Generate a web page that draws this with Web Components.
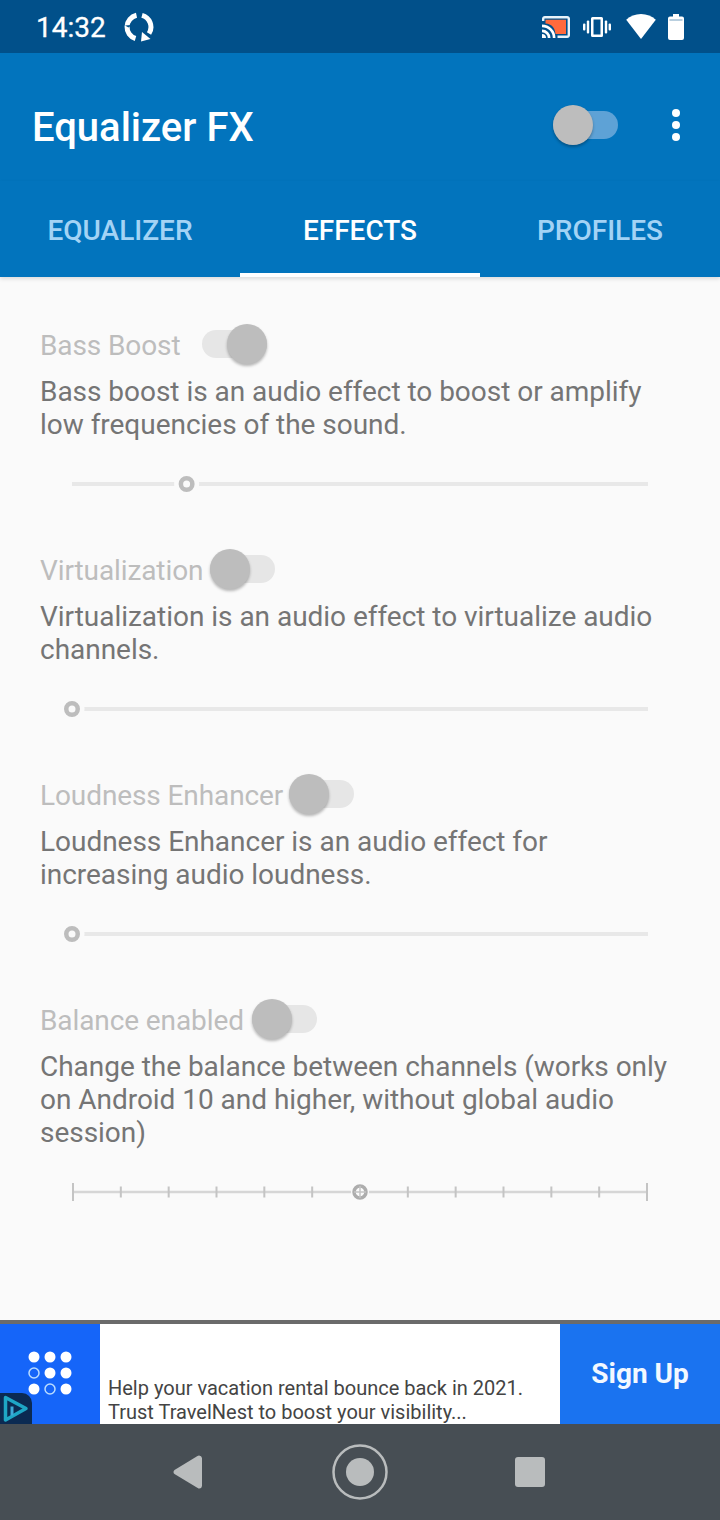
<!DOCTYPE html>
<html>
<head>
<meta charset="utf-8">
<title>Equalizer FX</title>
<style>
  html, body { margin: 0; padding: 0; }
  body { width: 720px; height: 1520px; overflow: hidden; font-family: Roboto, "Liberation Sans", sans-serif; background: #fafafa; }
  #page { display: flex; flex-direction: column; height: 1520px; }
</style>
</head>
<body>
<div id="page">
  <status-bar time="14:32"></status-bar>
  <app-bar heading="Equalizer FX"></app-bar>
  <tab-strip active="1">
    <span>EQUALIZER</span><span>EFFECTS</span><span>PROFILES</span>
  </tab-strip>
  <effects-page>
    <effect-block heading="Bass Boost" checked gap="21" value="0.199">Bass boost is an audio effect to boost or amplify low frequencies of the sound.</effect-block>
    <effect-block heading="Virtualization" gap="7" value="0">Virtualization is an audio effect to virtualize audio channels.</effect-block>
    <effect-block heading="Loudness Enhancer" gap="6" value="0">Loudness Enhancer is an audio effect for increasing audio loudness.</effect-block>
    <effect-block heading="Balance enabled" gap="8" value="0.5" ticks="13">Change the balance between channels (works only on Android 10 and higher, without global audio session)</effect-block>
  </effects-page>
  <ad-banner action="Sign Up">Help your vacation rental bounce back in 2021.<br>Trust TravelNest to boost your visibility...</ad-banner>
  <nav-bar></nav-bar>
</div>

<script>
class StatusBar extends HTMLElement {
  constructor() {
    super();
    this.attachShadow({ mode: 'open' });
  }

  connectedCallback() {
    this.shadowRoot.innerHTML = `
      <style>
        :host { display: flex; align-items: center; flex: none; height: 53px; background: #01508a; color: #fff; padding: 0 36px; box-sizing: border-box; }
        .time { font: 400 28px Roboto, sans-serif; margin-right: 17px; padding-top: 1px; -webkit-text-stroke: 0.3px #fff; }
        .right { margin-left: auto; display: flex; align-items: center; }
        svg { display: block; }
      </style>
      <span class="time">${this.getAttribute('time')}</span>
      <svg width="32" height="32" viewBox="0 0 32 32" fill="none" stroke="#fff" stroke-width="5">
        <path d="M13.500 4.300A12 12 0 0 0 12.500 27.500"/>
        <path d="M19 4.400A12 12 0 0 1 26 22.500"/>
        <path d="M18 30.500l1-9.500 8.500 7z" fill="#fff" stroke="none"/>
        <path d="M2 14.500l3.500 2 3-2.500" fill="#01508a" stroke="none"/>
      </svg>
      <div class="right">
        <svg width="28" height="22" viewBox="0 0 28 22" style="margin-right:13px">
          <path d="M3.500 3.800H24V18H13.500C13 11.500 9.500 8 3.500 7.500z" fill="#ff6a3d"/>
          <path d="M1.200 5V2.800A1.600 1.600 0 0 1 2.800 1.200h22.400a1.600 1.600 0 0 1 1.600 1.600v16.400a1.600 1.600 0 0 1-1.600 1.600H15.500" fill="none" stroke="#e9f3fa" stroke-width="2.400"/>
          <path d="M0 8.500A13.500 13.500 0 0 1 13.500 22h-2.700A10.800 10.800 0 0 0 0 11.200zM0 13.500A8.500 8.500 0 0 1 8.500 22H5.800A5.800 5.800 0 0 0 0 16.200zM0 18a4 4 0 0 1 4 4H0z" fill="#fff"/>
        </svg>
        <svg width="28" height="20" viewBox="0 0 28 20" fill="#fff" style="margin-right:15px">
          <path d="M9.500 0h9A1.500 1.500 0 0 1 20 1.500v17a1.500 1.500 0 0 1-1.500 1.500h-9A1.500 1.500 0 0 1 8 18.500v-17A1.500 1.500 0 0 1 9.500 0zM10.500 2.500v15h7v-15z"/>
          <rect x="3.800" y="3.500" width="2.400" height="13" rx="1"/><rect x="0" y="6.500" width="2.400" height="7" rx="1"/>
          <rect x="21.800" y="3.500" width="2.400" height="13" rx="1"/><rect x="25.600" y="6.500" width="2.400" height="7" rx="1"/>
        </svg>
        <svg width="30" height="25" viewBox="0 0 30 25" fill="#fff" style="margin-right:12px"><path d="M15 0c5.800 0 10.800 2.200 14.800 5.800L15 25 .2 5.800C4.200 2.200 9.200 0 15 0z"/></svg>
        <svg width="16" height="26" viewBox="0 0 16 26" fill="#fff">
          <path d="M5 0h6v2.500h3A2 2 0 0 1 16 4.500v19.500a2 2 0 0 1-2 2H2a2 2 0 0 1-2-2V4.500a2 2 0 0 1 2-2h3z"/>
          <rect x="1.500" y="5.500" width="13" height="1" fill="#01508a" opacity=".55"/>
        </svg>
      </div>
    `;
  }
}

class AppBar extends HTMLElement {
  constructor() {
    super();
    this.attachShadow({ mode: 'open' });
  }

  connectedCallback() {
    this.shadowRoot.innerHTML = `
      <style>
        :host { display: flex; align-items: center; flex: none; height: 128px; background: #0274bd; color: #fff; padding: 16px 40px 0 32px; box-sizing: border-box; }
        h1 { font: 500 40px Roboto, sans-serif; margin: 4px 0 0; flex: 1; }
        .dots { display: flex; flex-direction: column; gap: 4px; margin-left: 54px; }
        .dots i { width: 8px; height: 8px; border-radius: 50%; background: #fff; }
      </style>
      <h1>${this.getAttribute('heading')}</h1>
      <toggle-switch track="#5ea2d6" thumb="#bdbdbd"></toggle-switch>
      <div class="dots"><i></i><i></i><i></i></div>
    `;
  }
}

class TabStrip extends HTMLElement {
  constructor() {
    super();
    this.attachShadow({ mode: 'open' });
  }

  connectedCallback() {
    this.shadowRoot.innerHTML = `
      <style>
        :host { display: grid; grid-template-columns: repeat(3, 1fr); flex: none; height: 96px; background: #0274bd; position: relative; z-index: 1; box-shadow: 0 2px 4px rgba(0,0,0,.12); }
        .tab { display: flex; align-items: center; justify-content: center; box-sizing: border-box; padding-top: 6px; font: 500 28px Roboto, sans-serif; color: #a3d3f5; border-bottom: 4px solid transparent; }
        .tab.on { color: #fff; border-bottom-color: #fff; }
      </style>
    `;
    const active = Number(this.getAttribute('active'));
    [...this.children].forEach((item, i) => {
      const tab = document.createElement('div');
      tab.className = i === active ? 'tab on' : 'tab';
      tab.textContent = item.textContent;
      this.shadowRoot.appendChild(tab);
    });
  }
}

class EffectsPage extends HTMLElement {
  constructor() {
    super();
    this.attachShadow({ mode: 'open' });
    this.shadowRoot.innerHTML = `
      <style>
        :host { display: flex; flex-direction: column; flex: 1; min-height: 0; background: #fafafa; padding-top: 47px; }
      </style>
      <slot></slot>
    `;
  }
}

class ToggleSwitch extends HTMLElement {
  constructor() {
    super();
    this.attachShadow({ mode: 'open' });
  }

  connectedCallback() {
    const track = this.getAttribute('track') || '#e6e6e6';
    const thumb = this.getAttribute('thumb') || '#bdbdbd';
    this.shadowRoot.innerHTML = `
      <style>
        :host { display: block; position: relative; flex: none; width: 65px; height: 28px; border-radius: 14px; background: ${track}; }
        .thumb { position: absolute; top: -6px; left: 0; width: 40px; height: 40px; border-radius: 50%; background: ${thumb}; box-shadow: 0 2px 3px rgba(0,0,0,.28); }
        :host([checked]) .thumb { left: 25px; }
      </style>
      <div class="thumb"></div>
    `;
  }
}

class EffectBlock extends HTMLElement {
  constructor() {
    super();
    this.attachShadow({ mode: 'open' });
  }

  connectedCallback() {
    const checked = this.hasAttribute('checked') ? 'checked' : '';
    const ticks = this.getAttribute('ticks') ? `ticks="${this.getAttribute('ticks')}"` : '';
    this.shadowRoot.innerHTML = `
      <style>
        :host { display: block; padding: 0 40px; margin-bottom: 49px; }
        .head { display: flex; align-items: center; height: 40px; gap: ${this.getAttribute('gap')}px; }
        .title { font: 400 28px Roboto, sans-serif; letter-spacing: -0.1px; color: #bdbdbd; white-space: nowrap; padding-top: 2px; }
        .desc { font: 400 28px/33px Roboto, sans-serif; letter-spacing: -0.03px; color: #757575; margin-top: 11px; width: 630px; }
        eq-slider { margin-top: 27px; }
      </style>
      <div class="head">
        <span class="title">${this.getAttribute('heading')}</span>
        <toggle-switch ${checked}></toggle-switch>
      </div>
      <div class="desc"><slot></slot></div>
      <eq-slider value="${this.getAttribute('value')}" ${ticks}></eq-slider>
    `;
  }
}

class EqSlider extends HTMLElement {
  constructor() {
    super();
    this.attachShadow({ mode: 'open' });
  }

  connectedCallback() {
    const value = Number(this.getAttribute('value'));
    const ticks = Number(this.getAttribute('ticks')) || 0;
    const w = 576;
    const x = 32 + value * w;
    let parts = '';
    if (ticks) {
      parts += `<line x1="33" y1="16" x2="607" y2="16" stroke="#d6d6d6" stroke-width="2.500"/>`;
      for (let i = 0; i < ticks; i++) {
        const tx = 33 + i * 574 / (ticks - 1);
        const h = (i === 0 || i === ticks - 1) ? 9 : 5.500;
        parts += `<line x1="${tx}" y1="${16 - h}" x2="${tx}" y2="${16 + h}" stroke="#c4c4c4" stroke-width="2"/>`;
      }
      parts += `<circle cx="320" cy="16" r="9" fill="#fafafa"/>
        <circle cx="320" cy="16" r="6" fill="#fafafa" stroke="#adadad" stroke-width="3.500"/>
        <path d="M320 10v12M314 16h12" stroke="#c4c4c4" stroke-width="1.500"/>`;
    } else {
      parts += `<line x1="32" y1="16" x2="608" y2="16" stroke="#e8e8e8" stroke-width="4"/>`;
      parts += `<circle cx="${x}" cy="16" r="12.500" fill="#fafafa"/>
        <circle cx="${x}" cy="16" r="5.750" fill="#fafafa" stroke="#bdbdbd" stroke-width="4.500"/>`;
    }
    this.shadowRoot.innerHTML = `
      <style>
        :host { display: block; height: 32px; }
        svg { display: block; }
      </style>
      <svg width="640" height="32" viewBox="0 0 640 32">${parts}</svg>
    `;
  }
}

class AdBanner extends HTMLElement {
  constructor() {
    super();
    this.attachShadow({ mode: 'open' });
    this.shadowRoot.innerHTML = `
      <style>
        :host { display: grid; grid-template-columns: 100px 1fr 160px; flex: none; height: 100px; border-top: 4px solid #6b6b6b; background: #fff; }
        .logo { background: #1565f9; display: flex; align-items: center; justify-content: center; position: relative; }
        .logo svg.grid { margin-top: -2px; }
        .mark { position: absolute; left: 0; bottom: 0; }
        .copy { align-self: end; padding: 0 8px; font: 400 20px/24px Roboto, sans-serif; color: #444; white-space: nowrap; overflow: hidden; }
        .cta { background: #1a73f0; color: #f2f8ff; font: 700 28px Roboto, sans-serif; display: flex; align-items: center; justify-content: center; padding-bottom: 2px; }
      </style>
      <div class="logo">
        <svg class="grid" width="44" height="44" viewBox="0 0 44 44" fill="#fff">
          <circle cx="6" cy="6" r="5.500"/><circle cx="22" cy="6" r="5.500"/><circle cx="38" cy="6" r="5.500"/>
          <circle cx="6" cy="22" r="5" fill="none" stroke="#b9dcff" stroke-width="1.500"/><circle cx="22" cy="22" r="5.500"/><circle cx="38" cy="22" r="5.500"/>
          <circle cx="6" cy="38" r="5.500"/><circle cx="22" cy="38" r="5" fill="none" stroke="#b9dcff" stroke-width="1.500"/><circle cx="38" cy="38" r="5.500"/>
        </svg>
        <svg class="mark" width="32" height="31" viewBox="0 0 32 31">
          <path d="M0 0h22a10 10 0 0 1 10 10v21H0z" fill="#0b2a52"/>
          <path d="M5.500 4.500L26 15.500 5.500 27z" fill="none" stroke="#1ea6c6" stroke-width="3.500" stroke-linejoin="round"/>
          <path d="M12 13.500v9" stroke="#3fa9d8" stroke-width="3"/>
        </svg>
      </div>
      <div class="copy"><slot></slot></div>
    `;
  }

  connectedCallback() {
    if (this.shadowRoot.querySelector('.cta')) return;
    const cta = document.createElement('div');
    cta.className = 'cta';
    cta.textContent = this.getAttribute('action');
    this.shadowRoot.appendChild(cta);
  }
}

class NavBar extends HTMLElement {
  constructor() {
    super();
    this.attachShadow({ mode: 'open' });
    this.shadowRoot.innerHTML = `
      <style>
        :host { display: flex; align-items: center; justify-content: center; gap: 127px; flex: none; height: 96px; padding-right: 2px; background: #474e54; }
        svg { display: block; }
        .back { margin-right: 2px; }
      </style>
      <svg class="back" width="30" height="34" viewBox="0 0 30 34" fill="#b9bcbd"><path d="M26 .5a3 3 0 0 1 3 2.500v28a3 3 0 0 1-3.500 2.500L1.500 19a2.500 2.500 0 0 1 0-4L24.500 1z"/></svg>
      <svg width="56" height="56" viewBox="0 0 56 56"><circle cx="28" cy="28" r="26.500" fill="none" stroke="#b9bcbd" stroke-width="2.500"/><circle cx="28" cy="28" r="14" fill="#b9bcbd"/></svg>
      <svg width="30" height="30" viewBox="0 0 30 30"><rect width="30" height="30" rx="3" fill="#b9bcbd"/></svg>
    `;
  }
}

customElements.define('status-bar', StatusBar);
customElements.define('app-bar', AppBar);
customElements.define('tab-strip', TabStrip);
customElements.define('effects-page', EffectsPage);
customElements.define('toggle-switch', ToggleSwitch);
customElements.define('effect-block', EffectBlock);
customElements.define('eq-slider', EqSlider);
customElements.define('ad-banner', AdBanner);
customElements.define('nav-bar', NavBar);
</script>
</body>
</html>
